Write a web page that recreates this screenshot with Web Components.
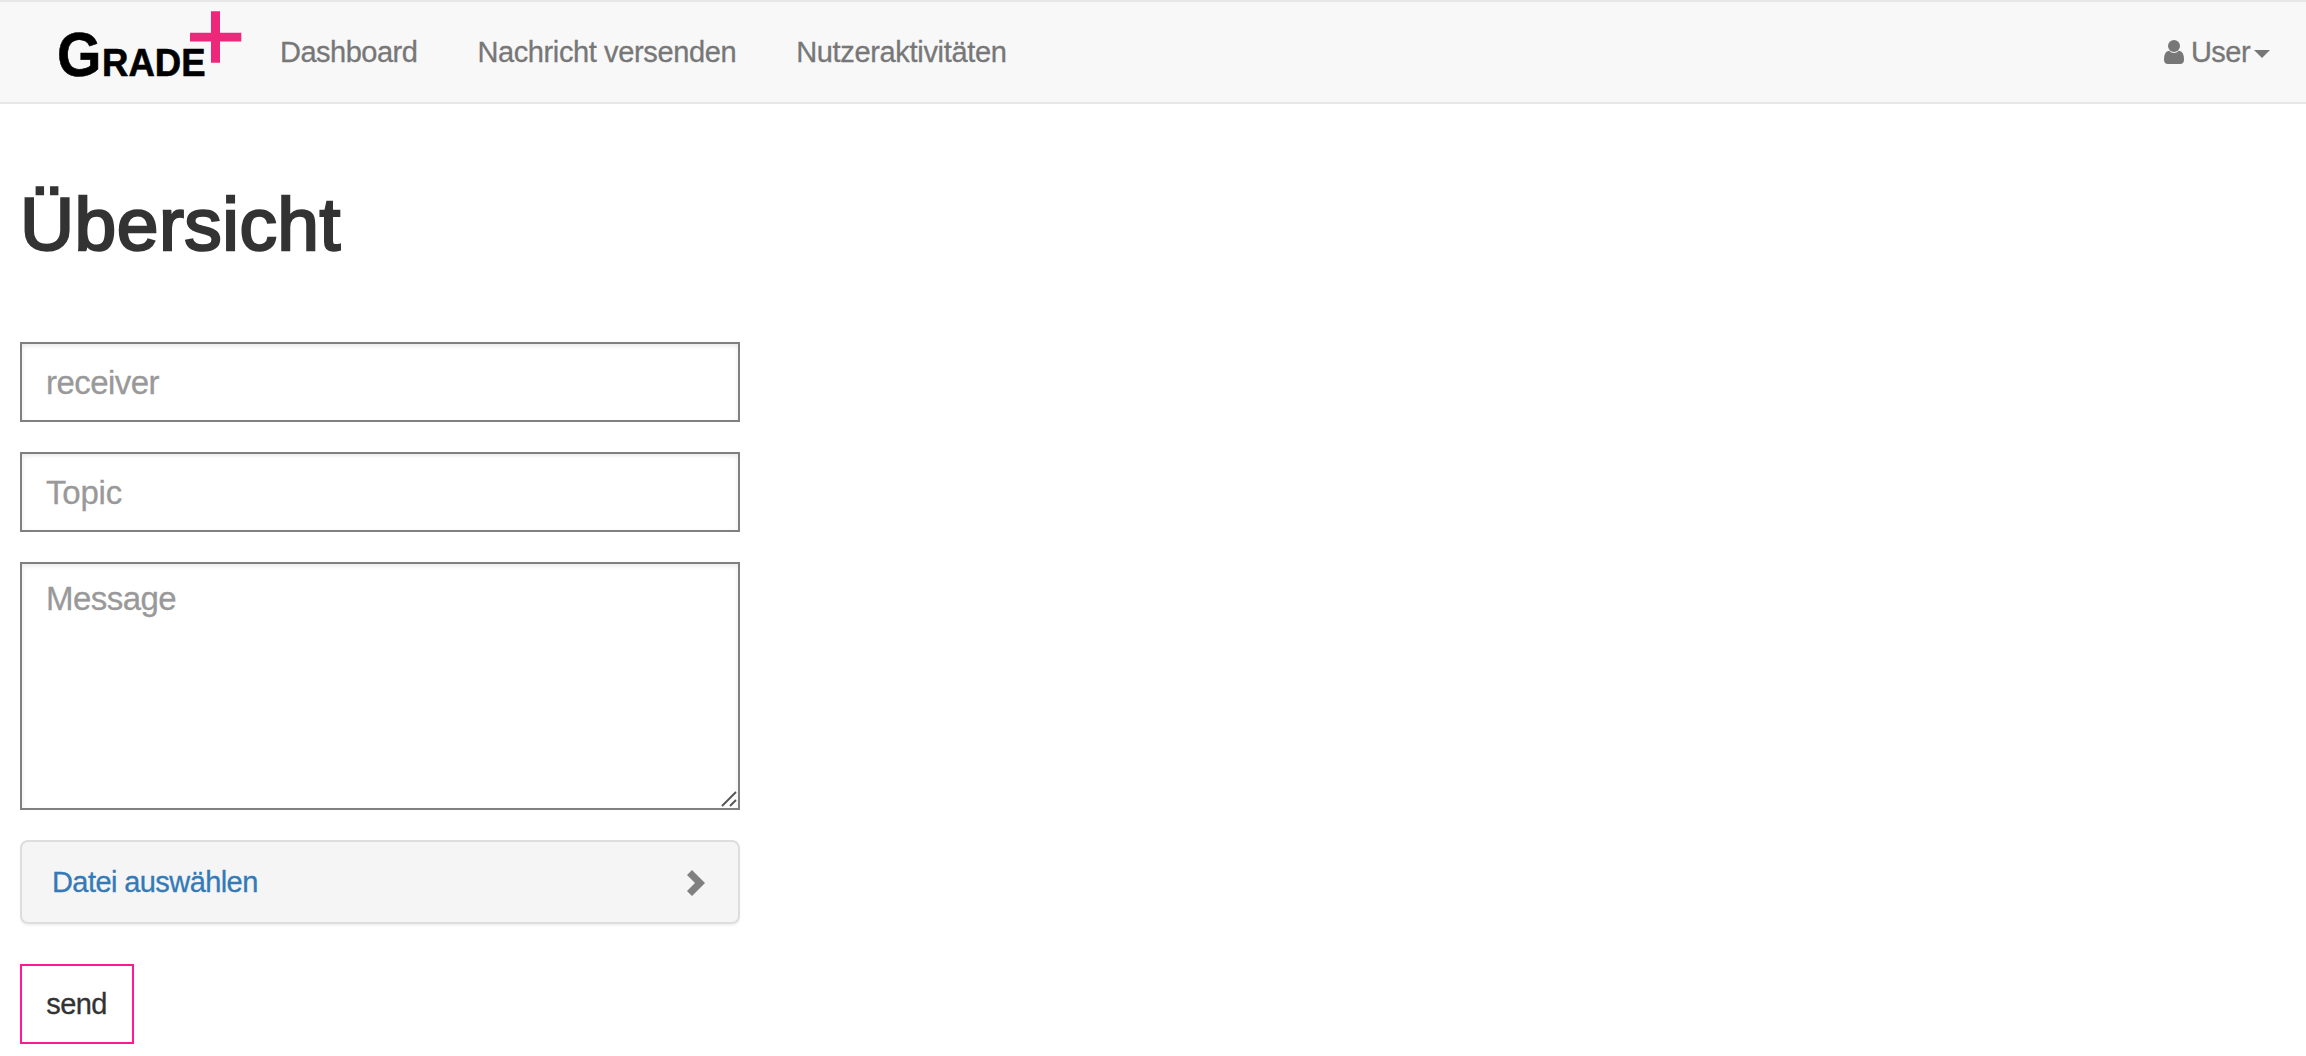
<!DOCTYPE html>
<html lang="de">
<head>
<meta charset="utf-8">
<title>Grade+</title>
<style>
html,body{margin:0;background:#fff}
body{font:29px/40px "Liberation Sans",Arial,sans-serif;color:#333;height:1056px;overflow:hidden}
</style>
</head>
<body>
<grade-page></grade-page>
<script>
const define = (name, html, init) => {
  const template = document.createElement('template');
  template.innerHTML = html;
  customElements.define(name, class extends HTMLElement {
    constructor() {
      super();
      this.attachShadow({mode: 'open'}).append(template.content.cloneNode(true));
    }
    connectedCallback() { if (init) init(this, this.shadowRoot); }
  });
};

define('grade-logo', `
<style>:host{display:block;width:192px;height:84px}svg{display:block;overflow:visible}</style>
<svg width="192" height="84" viewBox="50 10 192 84" font-family="Liberation Sans, Arial, sans-serif" font-weight="700">
<text x="57" y="76" font-size="62.5" textLength="44.500" lengthAdjust="spacingAndGlyphs" stroke="#000" stroke-width=".6">G</text>
<text x="102" y="76" font-size="38" textLength="103.500" lengthAdjust="spacingAndGlyphs" stroke="#000" stroke-width=".6">RADE</text>
<path fill="#ed2779" d="M211 11.3h9v21.4h21.3v8.8H220v21.2h-9V41.500h-21v-8.800h21z"/>
</svg>`);

define('nav-link', `
<style>:host{display:block;padding:0 30px;color:#777;-webkit-text-stroke:.3px #777}a{color:inherit;text-decoration:none;white-space:nowrap}</style>
<a><slot></slot></a>`);

define('user-menu', `
<style>:host{display:flex;align-items:center;color:#777;margin-left:auto;letter-spacing:-.55px;-webkit-text-stroke:.3px #777}
svg{display:block;flex:none}.name{margin:0 4px 0 7px}</style>
<svg width="20" height="24" viewBox="0 0 20 24" fill="#777"><circle cx="10" cy="6" r="6"/><path d="M5 10.700Q10 15.300 15 10.700Q20 11.200 20 19.500Q20 24 16 24H4Q0 24 0 19.500Q0 11.200 5 10.700z"/></svg>
<span class="name"><slot></slot></span>
<svg width="16" height="8" viewBox="0 0 16 8" fill="#777" style="margin-top:4px"><path d="M0 0h16L8 8z"/></svg>`);

define('nav-bar', `
<style>:host{display:flex;box-sizing:border-box;height:104px;padding:0 36px 0 50px;background:#f8f8f8;border:solid #e7e7e7;border-width:2px 0}
grade-logo{margin-top:8px}.links{display:flex;padding:30px 0 0 8px}user-menu{height:40px;margin-top:30px}</style>
<grade-logo></grade-logo>
<div class="links">
<nav-link style="letter-spacing:-.5px">Dashboard</nav-link>
<nav-link style="letter-spacing:-.38px">Nachricht versenden</nav-link>
<nav-link style="letter-spacing:-.33px">Nutzeraktivitäten</nav-link>
</div>
<user-menu>User</user-menu>`);

define('text-field', `
<style>:host{display:block}
input,textarea{display:block;box-sizing:border-box;width:100%;height:80px;margin:0;border:2px solid #808080;border-radius:0;outline:0;background:#fff;padding:1px 24px 0;font:33px/44px "Liberation Sans",Arial,sans-serif;letter-spacing:var(--track,0);color:#333;box-shadow:inset 0 2px 4px rgba(0,0,0,.09)}
textarea{height:248px;padding-top:13px;resize:none}
::placeholder{color:#999;opacity:1;-webkit-text-stroke:.3px #999}
.area{display:grid}.area>*{grid-area:1/1}
svg{align-self:end;justify-self:end;margin:0 3px 3px 0}</style>
<input type="text">`, (host, root) => {
  let field = root.querySelector('input');
  if (field && host.hasAttribute('multiline')) {
    const area = document.createElement('div');
    area.className = 'area';
    area.innerHTML = '<textarea></textarea><svg width="16" height="16" viewBox="0 0 16 16" fill="none" stroke="#555" stroke-width="1.900"><path d="M1 15L15 1M9 15l6-6"/></svg>';
    field.replaceWith(area);
    field = area.querySelector('textarea');
  }
  if (field) field.placeholder = host.getAttribute('label');
});

define('file-panel', `
<style>:host{display:flex;align-items:center;justify-content:space-between;box-sizing:border-box;height:84px;border:2px solid #ddd;border-radius:8px;background:#f5f5f5;padding:0 33px 0 30px;box-shadow:0 2px 2px rgba(0,0,0,.05)}
a{color:#337ab7;letter-spacing:-.58px;margin-bottom:1px;-webkit-text-stroke:.3px #337ab7}svg{display:block;margin-top:2px}</style>
<a><slot></slot></a>
<svg width="18" height="26" viewBox="0 0 18 26" fill="#808080"><path d="M5 0l13 13L5 26 0 21l8-8-8-8z"/></svg>`);

define('send-button', `
<style>:host{display:block}
button{display:block;box-sizing:border-box;width:114px;height:80px;margin:0;padding:0 1px 1px 0;border:2px solid #ff1a90;border-radius:0;background:#fff;color:#333;font:29px/40px "Liberation Sans",Arial,sans-serif;letter-spacing:-.6px;-webkit-text-stroke:.3px #333}</style>
<button type="button"><slot></slot></button>`);

define('grade-page', `
<style>:host{display:block}
h1{margin:0;padding:80px 0 0 20px;height:158px;font-size:75px;line-height:80px;font-weight:400;letter-spacing:.45px;-webkit-text-stroke:2.4px #333}
form{display:flex;flex-direction:column;gap:30px;width:720px;padding-left:20px}
send-button{margin-top:10px}</style>
<nav-bar></nav-bar>
<main><h1>Übersicht</h1>
<form>
<text-field label="receiver" style="--track:-.55px"></text-field>
<text-field label="Topic" style="--track:-.2px"></text-field>
<text-field label="Message" multiline style="--track:-.55px"></text-field>
<file-panel>Datei auswählen</file-panel>
<send-button>send</send-button>
</form></main>`);
</script>
</body>
</html>
